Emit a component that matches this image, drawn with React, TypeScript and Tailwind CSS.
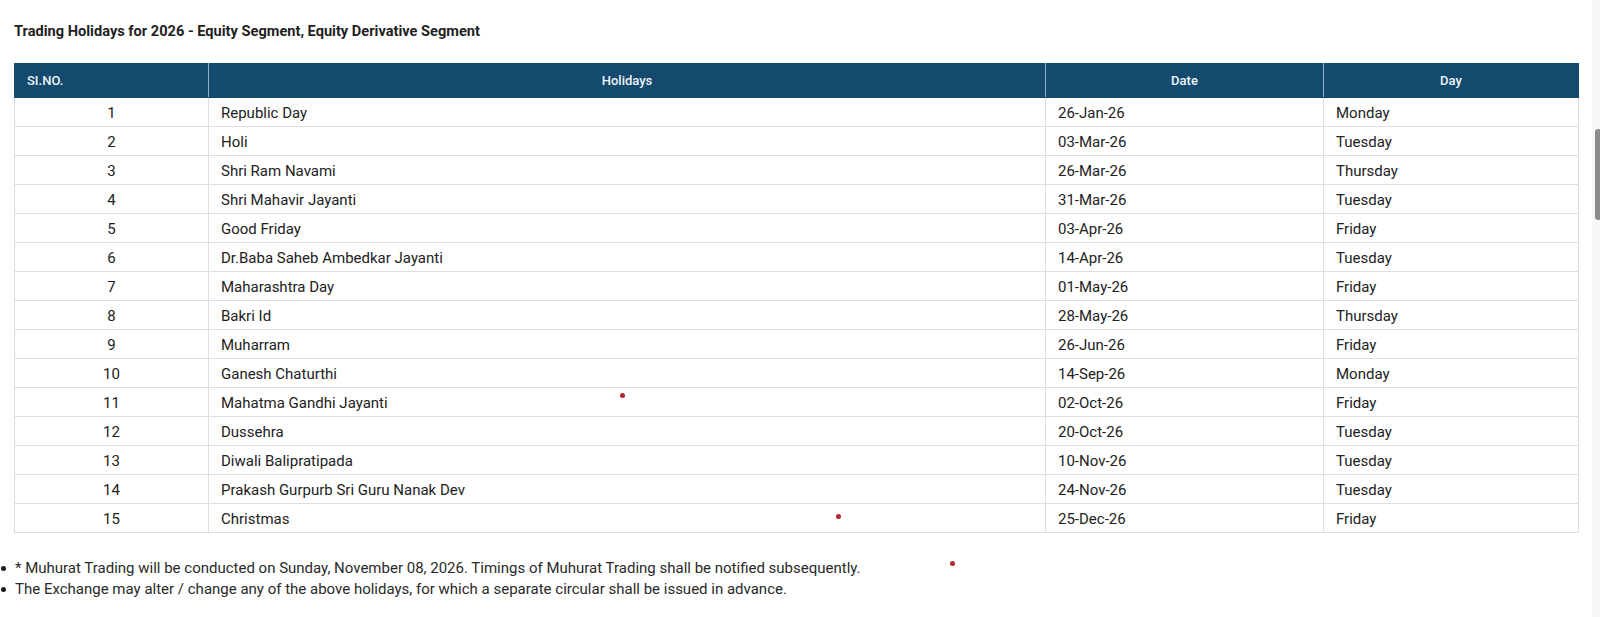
const holidays: [string, string, string][] = [
  ["Republic Day", "26-Jan-26", "Monday"],
  ["Holi", "03-Mar-26", "Tuesday"],
  ["Shri Ram Navami", "26-Mar-26", "Thursday"],
  ["Shri Mahavir Jayanti", "31-Mar-26", "Tuesday"],
  ["Good Friday", "03-Apr-26", "Friday"],
  ["Dr.Baba Saheb Ambedkar Jayanti", "14-Apr-26", "Tuesday"],
  ["Maharashtra Day", "01-May-26", "Friday"],
  ["Bakri Id", "28-May-26", "Thursday"],
  ["Muharram", "26-Jun-26", "Friday"],
  ["Ganesh Chaturthi", "14-Sep-26", "Monday"],
  ["Mahatma Gandhi Jayanti", "02-Oct-26", "Friday"],
  ["Dussehra", "20-Oct-26", "Tuesday"],
  ["Diwali Balipratipada", "10-Nov-26", "Tuesday"],
  ["Prakash Gurpurb Sri Guru Nanak Dev", "24-Nov-26", "Tuesday"],
  ["Christmas", "25-Dec-26", "Friday"],
];

const App = () => {
  return (
    <main className="relative h-[617px] w-[1600px] overflow-hidden bg-white font-['Roboto',sans-serif] text-[#222]">
      <div className="pl-[14px] pt-[21px]">
        <h1 className="text-[14.6px] font-bold leading-[20px] text-[#1f1f1f]">
          Trading Holidays for 2026 - Equity Segment, Equity Derivative Segment
        </h1>

        <table className="mt-[22px] w-[1564px] table-fixed border-collapse text-[15px]">
          <colgroup>
            <col className="w-[194px]" />
            <col className="w-[837px]" />
            <col className="w-[278px]" />
            <col className="w-[255px]" />
          </colgroup>
          <thead>
            <tr className="h-[34px] bg-[#134a6e] text-[13px] text-[#eef4fa]">
              <th className="border border-[#134a6e] border-r-[#8fb0c9] px-3 text-left font-medium">
                SI.NO.
              </th>
              <th className="border border-[#134a6e] border-r-[#8fb0c9] px-3 text-center font-medium">
                Holidays
              </th>
              <th className="border border-[#134a6e] border-r-[#8fb0c9] px-3 text-center font-medium">
                Date
              </th>
              <th className="border border-[#134a6e] px-3 text-center font-medium">
                Day
              </th>
            </tr>
          </thead>
          <tbody>
            {holidays.map(([name, date, day], i) => (
              <tr key={name} className="h-[29px]">
                <td className="border border-[#dedede] px-3 pt-[2px] text-center">
                  {i + 1}
                </td>
                <td className="border border-[#dedede] px-3 pt-[2px]">{name}</td>
                <td className="border border-[#dedede] px-3 pt-[2px]">{date}</td>
                <td className="border border-[#dedede] px-3 pt-[2px]">{day}</td>
              </tr>
            ))}
          </tbody>
        </table>
      </div>

      <ul className="mt-[25px] space-y-[1px] text-[15px] leading-[20px] text-[#2a2a2a]">
        <li className="flex items-center">
          <span className="mr-[9px] ml-[1px] h-[5px] w-[5px] rounded-full bg-[#1a1a1a]" />
          * Muhurat Trading will be conducted on Sunday, November 08, 2026. Timings of Muhurat Trading shall be notified subsequently.
        </li>
        <li className="flex items-center">
          <span className="mr-[9px] ml-[1px] h-[5px] w-[5px] rounded-full bg-[#1a1a1a]" />
          The Exchange may alter / change any of the above holidays, for which a separate circular shall be issued in advance.
        </li>
      </ul>

      {/* stray red markers */}
      <span className="absolute left-[620px] top-[393px] h-[5px] w-[5px] rounded-full bg-[#b3262b]" />
      <span className="absolute left-[836px] top-[514px] h-[5px] w-[5px] rounded-full bg-[#b3262b]" />
      <span className="absolute left-[950px] top-[561px] h-[5px] w-[5px] rounded-full bg-[#b3262b]" />

      {/* scrollbar */}
      <div className="absolute right-0 top-0 h-full w-[8px] bg-[#f8f8f8]" />
      <div className="absolute left-[1595px] top-[129px] h-[91px] w-[6px] rounded-full bg-[#8c8c8c]" />
    </main>
  );
};

export default App;
